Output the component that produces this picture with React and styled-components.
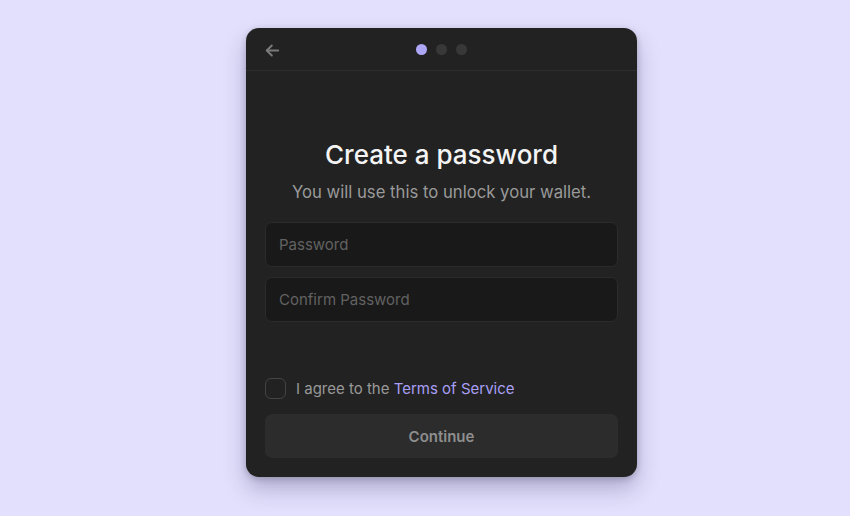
import React, { useState } from "react";
import styled, { createGlobalStyle } from "styled-components";

const GlobalStyle = createGlobalStyle`
  * { box-sizing: border-box; }
  body {
    margin: 0;
    background: #e3e0fd;
    font-family: Inter, "Noto Sans", sans-serif;
  }
`;

const Page = styled.div`
  width: 850px;
  height: 516px;
  display: flex;
  justify-content: center;
  padding: 28px 0 0 33px;
`;

const Card = styled.div`
  width: 391px;
  height: 449px;
  background: #222222;
  border-radius: 13px;
  display: flex;
  flex-direction: column;
  box-shadow: 0 12px 22px rgba(40, 36, 90, 0.28), 0 2px 6px rgba(0, 0, 0, 0.2);
  overflow: hidden;
`;

const Header = styled.div`
  height: 43px;
  flex-shrink: 0;
  display: flex;
  align-items: center;
  justify-content: center;
  position: relative;
  border-bottom: 1px solid #2d2d2d;
`;

const BackButton = styled.button`
  position: absolute;
  left: 17px;
  top: 13px;
  width: 18px;
  height: 18px;
  padding: 0;
  border: none;
  background: none;
  display: flex;
  align-items: center;
  justify-content: center;
  cursor: pointer;
`;

const Dots = styled.div`
  display: flex;
  gap: 9px;
`;

const Dot = styled.span`
  width: 11px;
  height: 11px;
  border-radius: 50%;
  background: ${(p) => (p.$active ? "#aea6f6" : "#383838")};
`;

const Body = styled.div`
  flex: 1;
  display: flex;
  flex-direction: column;
  padding: 68px 19px 19px;
`;

const Title = styled.h1`
  margin: 0;
  text-align: center;
  color: #f4f4f4;
  font-size: 26px;
  line-height: 32px;
  font-weight: 500;
`;

const Subtitle = styled.p`
  margin: 10px 0 19px;
  text-align: center;
  color: #9a9a9a;
  font-size: 16.7px;
  line-height: 22px;
`;

const Input = styled.input`
  width: 100%;
  height: 45px;
  background: #191919;
  border: 1px solid #2b2b2b;
  border-radius: 7px;
  padding: 0 13px;
  color: #ddd;
  font-family: inherit;
  font-size: 15px;
  outline: none;
  & + & { margin-top: 10px; }
  &::placeholder { color: #626262; }
`;

const Spacer = styled.div`
  flex: 1;
`;

const AgreeRow = styled.label`
  display: flex;
  align-items: center;
  gap: 10px;
  color: #999;
  font-size: 15px;
  cursor: pointer;
  margin-bottom: 15px;
`;

const Box = styled.span`
  width: 21px;
  height: 21px;
  border-radius: 6px;
  border: 1.5px solid #444;
  background: ${(p) => (p.$checked ? "#aea6f6" : "transparent")};
`;

const Link = styled.a`
  color: #a89ff4;
  text-decoration: none;
`;

const ContinueButton = styled.button`
  width: 100%;
  height: 44px;
  border: none;
  border-radius: 7px;
  background: #2c2c2c;
  color: #8e8e8e;
  font-family: inherit;
  font-size: 15px;
  font-weight: 600;
`;

export default function App() {
  const [agreed, setAgreed] = useState(false);
  return (
    <>
      <GlobalStyle />
      <Page>
        <Card>
          <Header>
            <BackButton aria-label="Back">
              <svg width="17" height="17" viewBox="0 0 24 24" fill="none" stroke="#7a7a7a" strokeWidth="2.8" strokeLinecap="round" strokeLinejoin="round">
                <path d="M20 12H4" />
                <path d="M11 5l-7 7 7 7" />
              </svg>
            </BackButton>
            <Dots>
              <Dot $active />
              <Dot />
              <Dot />
            </Dots>
          </Header>
          <Body>
            <Title>Create a password</Title>
            <Subtitle>You will use this to unlock your wallet.</Subtitle>
            <Input type="password" placeholder="Password" />
            <Input type="password" placeholder="Confirm Password" />
            <Spacer />
            <AgreeRow onClick={() => setAgreed(!agreed)}>
              <Box $checked={agreed} />
              <span>
                I agree to the <Link href="#">Terms of Service</Link>
              </span>
            </AgreeRow>
            <ContinueButton disabled={!agreed}>Continue</ContinueButton>
          </Body>
        </Card>
      </Page>
    </>
  );
}
